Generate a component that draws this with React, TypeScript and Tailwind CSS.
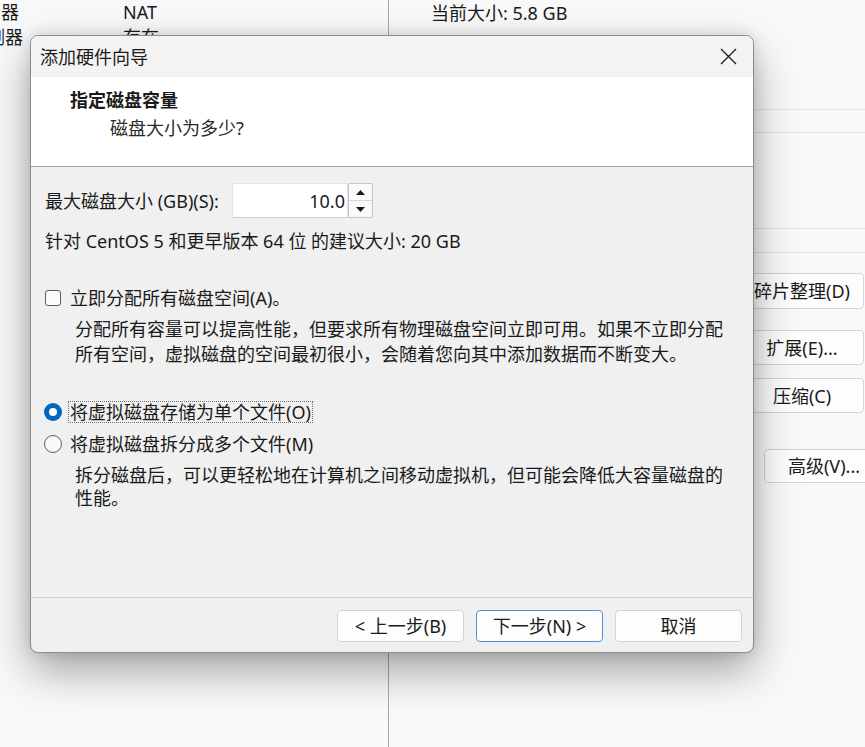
import React from "react";

function Radio({ checked }: { checked: boolean }) {
  if (checked) {
    return (
      <span className="w-[18px] h-[18px] rounded-full bg-[#0067c0] flex items-center justify-center shrink-0">
        <span className="w-[8px] h-[8px] rounded-full bg-white" />
      </span>
    );
  }
  return <span className="w-[18px] h-[18px] rounded-full border border-[#5f5f5f] bg-[#f8f8f8] shrink-0" />;
}

export default function App() {
  return (
    <div className="relative w-[865px] h-[747px] overflow-hidden bg-[#f9f9f9] text-[18px] leading-[24px] text-[#1a1a1a] font-['Noto_Sans','Noto_Sans_CJK_SC',sans-serif]">
      {/* background window */}
      <div className="flex h-full">
        <div className="w-[389px] shrink-0 border-r border-[#a9a9a9] flex">
          <div className="w-[123px] shrink-0 overflow-hidden">
            <div className="h-[25px] leading-[25px] pl-[1px]">器</div>
            <div className="h-[25px] leading-[25px] whitespace-nowrap ml-[-13px]">
              <span className="text-[#1f3b73]">制</span>器
            </div>
          </div>
          <div>
            <div className="h-[25px] leading-[25px]">NAT</div>
            <div className="h-[25px] leading-[25px]">存在</div>
          </div>
        </div>
        <div className="flex-1 min-w-0 overflow-hidden flex flex-col">
          <div className="h-[26px] leading-[26px] pl-[42px] whitespace-nowrap">当前大小: 5.8 GB</div>
          <div className="h-[83px]" />
          <div className="h-[23px] border-t border-[#e4e4e4]" />
          <div className="h-[96px] border-t border-[#e4e4e4]" />
          <div className="h-[24px] border-t border-[#e4e4e4]" />
          <div className="border-t border-[#e4e4e4]" />
          <div className="mt-[20px] self-end mr-[1px] w-[124px] h-[36px] rounded-[4px] border border-[#d4d4d4] bg-[#fdfdfd] flex items-center justify-center whitespace-nowrap">
            碎片整理(D)
          </div>
          <div className="mt-[21px] self-end mr-[1px] w-[124px] h-[35px] rounded-[4px] border border-[#d4d4d4] bg-[#fdfdfd] flex items-center justify-center whitespace-nowrap">
            扩展(E)...
          </div>
          <div className="mt-[13px] self-end mr-[1px] w-[124px] h-[35px] rounded-[4px] border border-[#d4d4d4] bg-[#fdfdfd] flex items-center justify-center whitespace-nowrap">
            压缩(C)
          </div>
          <div className="mt-[36px] ml-[375px] w-[120px] shrink-0 h-[34px] rounded-[4px] border border-[#d4d4d4] bg-[#fdfdfd] flex items-center justify-center whitespace-nowrap">
            高级(V)...
          </div>
        </div>
      </div>

      {/* dialog */}
      <div className="absolute left-[30px] top-[35px] w-[724px] h-[618px] rounded-[8px] border border-[#8c8c8c] bg-[#f0f0f0] overflow-hidden flex flex-col shadow-[0_18px_44px_rgba(0,0,0,0.35),0_0_14px_rgba(0,0,0,0.12)]">
        <div className="h-[41px] shrink-0 bg-[#f3f3f3] flex items-center justify-between pl-[9px] pr-[16px]">
          <span>添加硬件向导</span>
          <svg width="17" height="17" viewBox="0 0 17 17">
            <path d="M1 1 L16 16 M16 1 L1 16" stroke="#1a1a1a" strokeWidth="1.3" fill="none" />
          </svg>
        </div>
        <div className="h-[90px] shrink-0 bg-white border-b border-[#a3a3a3] pl-[39px] pt-[11px]">
          <div className="font-bold">指定磁盘容量</div>
          <div className="mt-[4px] pl-[40px] text-[#2a2a2a]">磁盘大小为多少?</div>
        </div>
        <div className="flex-1 pl-[14px] flex flex-col">
          <div className="mt-[16px] h-[35px] flex items-center">
            <span className="w-[187px] shrink-0 whitespace-nowrap">最大磁盘大小 (GB)(S):</span>
            <div className="w-[116px] h-[35px] bg-white border border-[#e2e2e2] border-b-[#cfcfcf] flex items-center justify-end pr-[2px]">
              10.0
            </div>
            <div className="w-[25px] h-[35px] border border-[#c6c6c6] rounded-[2px] bg-[#fafafa] flex flex-col">
              <div className="flex-1 flex items-center justify-center border-b border-[#d6d6d6]">
                <svg width="9" height="5" viewBox="0 0 9 5">
                  <path d="M0 5 L4.5 0 L9 5 Z" fill="#1a1a1a" />
                </svg>
              </div>
              <div className="flex-1 flex items-center justify-center">
                <svg width="9" height="5" viewBox="0 0 9 5">
                  <path d="M0 0 L4.5 5 L9 0 Z" fill="#1a1a1a" />
                </svg>
              </div>
            </div>
          </div>
          <div className="mt-[11px] whitespace-nowrap">针对 CentOS 5 和更早版本 64 位 的建议大小: 20 GB</div>

          <div className="mt-[33px] h-[24px] flex items-center">
            <span className="w-[16px] h-[16px] rounded-[3px] border border-[#5b5b5b] bg-[#fbfbfb] shrink-0" />
            <span className="ml-[9px] whitespace-nowrap">立即分配所有磁盘空间(A)。</span>
          </div>
          <div className="mt-[7px] ml-[30px] leading-[25px] whitespace-nowrap">
            <div>分配所有容量可以提高性能，但要求所有物理磁盘空间立即可用。如果不立即分配</div>
            <div>所有空间，虚拟磁盘的空间最初很小，会随着您向其中添加数据而不断变大。</div>
          </div>

          <div className="mt-[33px] h-[24px] flex items-center -ml-[1px]">
            <Radio checked />
            <span className="ml-[6px] px-[1px] leading-[20px] border border-dotted border-[#707070] whitespace-nowrap">
              将虚拟磁盘存储为单个文件(O)
            </span>
          </div>
          <div className="mt-[8px] h-[24px] flex items-center -ml-[1px]">
            <Radio checked={false} />
            <span className="ml-[6px] px-[1px] leading-[20px] border border-transparent whitespace-nowrap">
              将虚拟磁盘拆分成多个文件(M)
            </span>
          </div>
          <div className="mt-[8px] ml-[30px] leading-[23px] whitespace-nowrap">
            <div>拆分磁盘后，可以更轻松地在计算机之间移动虚拟机，但可能会降低大容量磁盘的</div>
            <div>性能。</div>
          </div>
        </div>
        <div className="h-[55px] shrink-0 border-t border-[#cfcfcf] flex justify-end items-start pt-[12px] pr-[11px] gap-[12px]">
          <div className="w-[127px] h-[32px] rounded-[4px] border border-[#d3d3d3] bg-[#fdfdfd] flex items-center justify-center whitespace-nowrap">
            &lt; 上一步(B)
          </div>
          <div className="w-[127px] h-[32px] rounded-[4px] border border-[#4f93d8] bg-[#fdfdfd] flex items-center justify-center whitespace-nowrap">
            下一步(N) &gt;
          </div>
          <div className="w-[127px] h-[32px] rounded-[4px] border border-[#d3d3d3] bg-[#fdfdfd] flex items-center justify-center whitespace-nowrap">
            取消
          </div>
        </div>
      </div>
    </div>
  );
}
